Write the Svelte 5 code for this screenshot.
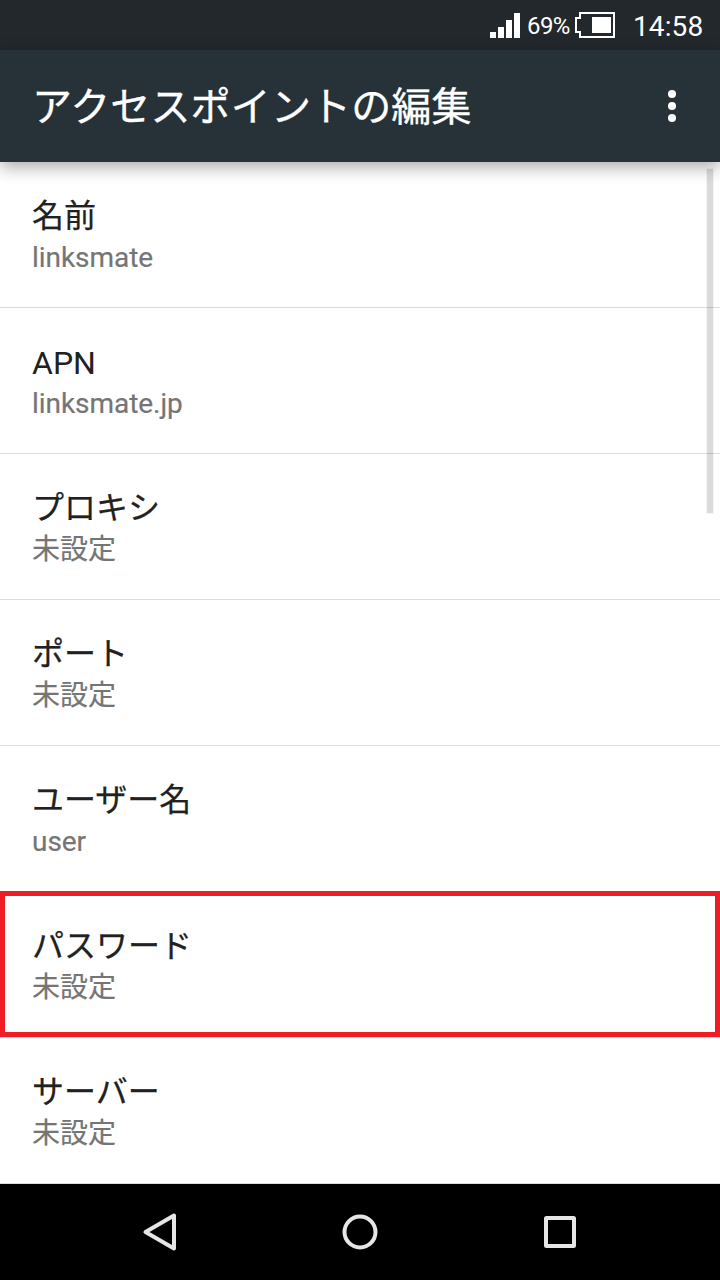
<script>
  const settings = [
    { title: '名前', value: 'linksmate' },
    { title: 'APN', value: 'linksmate.jp', latin: true },
    { title: 'プロキシ', value: '未設定' },
    { title: 'ポート', value: '未設定' },
    { title: 'ユーザー名', value: 'user' },
    { title: 'パスワード', value: '未設定', highlighted: true },
    { title: 'サーバー', value: '未設定' }
  ];
</script>

<div class="screen">
  <div class="status">
    <svg class="signal" width="30" height="25" viewBox="0 0 30 25" fill="#fff" shape-rendering="crispEdges">
      <path d="M0 19h6v6H0zM8 14h6v11H8zM16 7h6v18h-6zM24 0h6v25h-6z" />
    </svg>
    <span class="percent">69%</span>
    <svg class="battery" width="40" height="26" viewBox="0 0 40 26" shape-rendering="crispEdges">
      <path d="M5 1H39V25H5V20H1V6H5Z" fill="none" stroke="#fff" stroke-width="2" />
      <path d="M17 5h19v16H17z" fill="#fff" />
    </svg>
    <span class="clock">14:58</span>
  </div>

  <header>
    <h1>アクセスポイントの編集</h1>
    <svg width="8" height="32" viewBox="0 0 8 32" fill="#fff">
      <circle cx="4" cy="4" r="4" />
      <circle cx="4" cy="16" r="4" />
      <circle cx="4" cy="28" r="4" />
    </svg>
  </header>

  <main>
    {#each settings as item}
      <div class="row" class:highlighted={item.highlighted} class:latin={item.latin}>
        <div class="title">{item.title}</div>
        <div class="value">{item.value}</div>
      </div>
    {/each}
    <div class="scrollbar"></div>
  </main>

  <nav>
    <svg width="40" height="40" viewBox="0 0 40 40"><path d="M5.5 20L34 3.5V36.5Z" /></svg>
    <svg width="40" height="40" viewBox="0 0 40 40"><circle cx="20" cy="20" r="15.5" /></svg>
    <svg width="40" height="40" viewBox="0 0 40 40"><rect x="6" y="6" width="28" height="28" rx="0.5" /></svg>
  </nav>
</div>

<style>
  :global(body) {
    margin: 0;
    background: #fff;
  }
  .screen {
    width: 720px;
    height: 1280px;
    display: flex;
    flex-direction: column;
    overflow: hidden;
    background: #fff;
    font-family: Roboto, 'Noto Sans CJK JP', sans-serif;
  }
  .status {
    height: 50px;
    flex: none;
    box-sizing: border-box;
    display: flex;
    align-items: flex-start;
    padding: 12px 16px 0 0;
    justify-content: flex-end;
    background: #22282c;
    color: #fff;
  }
  .signal {
    margin: 1px 7px 0 0;
  }
  .percent {
    width: 48px;
    font-size: 24px;
    line-height: 28px;
    letter-spacing: -0.6px;
  }
  .battery {
    margin-right: 18px;
  }
  .clock {
    width: 71px;
    font-size: 28px;
    line-height: 30px;
    letter-spacing: 0.1px;
  }
  header {
    height: 112px;
    flex: none;
    box-sizing: border-box;
    display: flex;
    align-items: center;
    justify-content: space-between;
    padding: 0 44px 0 32px;
    background: #273238;
    position: relative;
    z-index: 1;
    box-shadow: 0 5px 16px rgba(0, 0, 0, 0.34);
  }
  h1 {
    margin: 0;
    padding-top: 3px;
    color: #fff;
    font-size: 40px;
    line-height: 48px;
    font-weight: 400;
    letter-spacing: 0.15px;
    -webkit-text-stroke: 0.3px #fff;
  }
  main {
    flex: 1;
    position: relative;
  }
  .row {
    height: 146px;
    box-sizing: border-box;
    padding: 33px 32px 0;
    border-bottom: 1px solid #dcdcdc;
    position: relative;
  }
  .title {
    font-size: 32px;
    line-height: 42px;
    color: #212121;
    -webkit-text-stroke: 0.25px #212121;
  }
  .value {
    margin-top: 2px;
    font-size: 28px;
    line-height: 38px;
    color: #757575;
    letter-spacing: -0.05px;
    -webkit-text-stroke: 0.2px #757575;
  }
  .latin {
    padding-top: 34px;
  }
  .latin .title {
    -webkit-text-stroke: 0;
  }
  .latin .value {
    margin-top: 1px;
  }
  .highlighted::after {
    content: '';
    position: absolute;
    inset: -1px 0 0;
    border: 5px solid #ee1c25;
  }
  .scrollbar {
    position: absolute;
    top: 7px;
    right: 7px;
    width: 6px;
    height: 344px;
    background: rgba(0, 0, 0, 0.14);
    box-shadow: 0 0 0 1px rgba(0, 0, 0, 0.04);
  }
  nav {
    height: 96px;
    flex: none;
    display: flex;
    align-items: center;
    justify-content: center;
    gap: 160px;
    background: #000;
  }
  nav svg {
    fill: none;
    stroke: #e6e6e6;
    stroke-width: 4;
    stroke-linejoin: round;
  }
</style>
